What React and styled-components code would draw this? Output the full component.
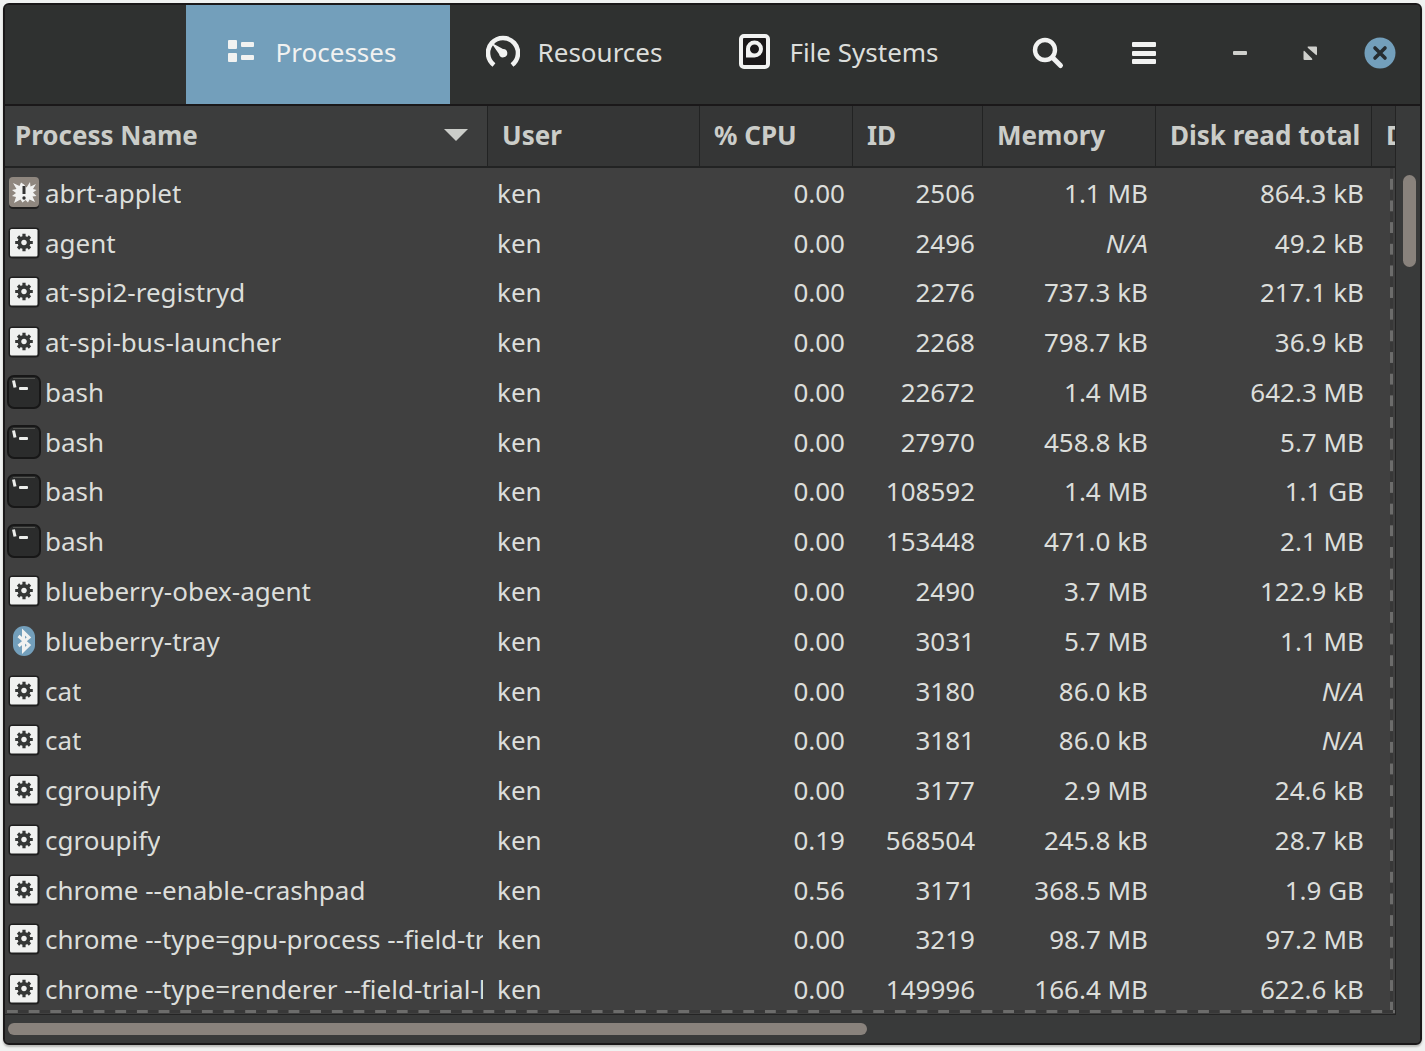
import React, { useState } from "react";
import styled, { createGlobalStyle, css } from "styled-components";

const color = {
  page: "#f0f2f1",
  frame: "#1a1819",
  bar: "#2f3130",
  head: "#353636",
  headSorted: "#3c3d3d",
  body: "#404040",
  trough: "#393a3a",
  thumb: "#89827c",
  accent: "#739fbb",
  text: "#dcdedb",
  headText: "#cbcdc9",
  bright: "#f1f2f1",
};

const GlobalStyle = createGlobalStyle`
  * { box-sizing: border-box; }
  body {
    margin: 0;
    background: ${color.page};
    color: ${color.text};
    font: 26px/36px "Noto Sans", "Open Sans", sans-serif;
  }
  button { font: inherit; color: inherit; background: none; border: 0; padding: 0; margin: 0; }
`;

const Page = styled.div`
  display: flex;
  min-height: 100vh;
  padding: 3px 3px 6px;
`;

const Window = styled.main`
  flex: 1;
  min-width: 0;
  display: flex;
  flex-direction: column;
  border: 2px solid ${color.frame};
  border-radius: 6px;
  background: ${color.body};
  box-shadow: 0 2px 2px #b9bab7;
  overflow: hidden;
`;

const TitleBar = styled.header`
  display: flex;
  align-items: stretch;
  height: 101px;
  padding-right: 5px;
  background: ${color.bar};
  border-bottom: 2px solid ${color.frame};
`;

const TabList = styled.div`
  flex: 1;
  display: flex;
  justify-content: flex-end;
  margin-right: 22px;
`;

const Tab = styled.button`
  display: flex;
  align-items: center;
  justify-content: center;
  gap: 18px;
  width: 264px;
  padding: 0 16px 5px 0;
  white-space: nowrap;
  color: ${(p) => (p.$active ? color.bright : color.text)};
  background: ${(p) => (p.$active ? color.accent : "transparent")};
`;

const BarButton = styled.button`
  display: flex;
  align-items: center;
  justify-content: center;
  width: 96px;
  padding-bottom: 5px;
  color: ${color.bright};
`;

const WindowButtons = styled.div`
  display: flex;
  margin-left: 13px;
`;

const WindowButton = styled(BarButton)`
  width: 70px;
  color: #cfd0cc;
`;

const Icon = styled.svg`
  flex: none;
  display: block;
  width: 34px;
  height: ${(p) => (p.$tall ? 36 : 34)}px;
`;

const Content = styled.div`
  flex: 1;
  display: grid;
  grid-template-columns: minmax(0, 1fr) 24px;
  grid-template-rows: 1fr 28px;
`;

const ListArea = styled.div`
  position: relative;
  display: flex;
  min-width: 0;
  border-right: 1px solid #242424;
  border-bottom: 1px solid #242424;
`;

/* Dashed hint along the edges where the list continues */
const Undershoot = styled.div`
  position: absolute;
  pointer-events: none;
  ${(p) =>
    p.$edge === "bottom"
      ? css`
          left: 2px;
          right: 0;
          bottom: 1px;
          height: 3px;
          background: linear-gradient(90deg, #6c6c6b 50%, #383838 50%) 0 0 / calc(65px / 3) 3px;
        `
      : css`
          top: 62px;
          right: 2px;
          bottom: 2px;
          width: 3px;
          background: linear-gradient(#383838 50%, #6c6c6b 50%) 0 0 / 3px calc(65px / 3);
        `}
`;

const Table = styled.table`
  flex: 1;
  min-width: 0;
  display: flex;
  flex-direction: column;
`;

const rowGrid = css`
  display: grid;
  grid-template-columns: minmax(0, 1fr) 212px 153px 130px 173px 216px 24px;
`;

const Head = styled.thead`
  display: block;
`;

const HeadRow = styled.tr`
  ${rowGrid}
  height: 62px;
  border-bottom: 2px solid #222323;
`;

const HeadCell = styled.th`
  display: flex;
  min-width: 0;
  padding: 0;
  overflow: hidden;
  background: ${(p) => (p.$sorted ? color.headSorted : color.head)};
  & + & { border-left: 1px solid #222323; }
`;

const SortButton = styled.button`
  flex: 1;
  display: flex;
  align-items: center;
  justify-content: space-between;
  padding: 0 0 2px ${(p) => (p.$first ? 10 : 14)}px;
  font-weight: 700;
  color: ${color.headText};
  white-space: nowrap;
`;

const Arrow = styled.svg`
  width: 26px;
  height: 14px;
  margin-right: 18px;
`;

const Body = styled.tbody`
  flex: 1;
  display: flex;
  flex-direction: column;
`;

const Row = styled.tr`
  ${rowGrid}
  flex: 1 0 44px;
  align-items: center;
`;

const Cell = styled.td`
  padding: 0 7px 0 10px;
  white-space: nowrap;
  text-align: ${(p) => (p.$number ? "right" : "left")};
  font-style: ${(p) => (p.$missing ? "italic" : "normal")};
`;

const NameCell = styled.td`
  display: flex;
  align-items: center;
  gap: 4px;
  min-width: 0;
  padding: 0 4px 0 2px;
`;

const Name = styled.span`
  overflow: hidden;
  white-space: nowrap;
`;

const Trough = styled.div`
  display: flex;
  flex-direction: ${(p) => (p.$vertical ? "column" : "row")};
  padding: ${(p) => (p.$vertical ? "69px 4px 6px 7px" : "8px 3px")};
  background: ${color.trough};
`;

const Thumb = styled.div`
  flex: 0 0 ${(p) => p.$size}%;
  border-radius: 7px;
  background: ${color.thumb};
`;

const Corner = styled.div`
  background: ${color.trough};
`;

function ListIcon() {
  return (
    <Icon $tall viewBox="0 0 34 36" fill="currentColor" aria-hidden="true">
      <rect x="4" y="6" width="9" height="9" rx="1" />
      <rect x="4" y="19" width="9" height="9" rx="1" />
      <rect x="17" y="8" width="13" height="5" rx="1" />
      <rect x="17" y="21" width="13" height="5" rx="1" />
    </Icon>
  );
}

function GaugeIcon() {
  return (
    <Icon $tall viewBox="0 0 34 36" fill="none" stroke={color.bright} aria-hidden="true">
      <path d="M8 31A15 15 0 1 1 26 31" strokeWidth="4.6" />
      <path d="M5 8.500L17 15A4.200 4.200 0 1 1 13 20Z" fill={color.bright} stroke="none" />
    </Icon>
  );
}

function DiskIcon() {
  return (
    <Icon $tall viewBox="0 0 34 36" aria-hidden="true">
      <rect x="4" y="2" width="27" height="31" rx="3" fill={color.frame} stroke={color.bright} strokeWidth="4" />
      <path
        fillRule="evenodd"
        fill={color.bright}
        d="M17.5 6.5A8.5 8.5 0 0 1 17.5 23.5H9V15A8.5 8.5 0 0 1 17.5 6.5ZM17.5 10.5A4.5 4.5 0 1 0 17.5 19.5A4.5 4.5 0 1 0 17.5 10.5Z"
      />
    </Icon>
  );
}

function SearchIcon() {
  return (
    <Icon $tall viewBox="0 0 34 36" fill="none" stroke="currentColor" aria-hidden="true">
      <circle cx="14" cy="16" r="10" strokeWidth="4.4" />
      <path d="M21.5 23.5L29.5 31.5" strokeWidth="5" strokeLinecap="round" />
    </Icon>
  );
}

function MenuIcon() {
  return (
    <Icon $tall viewBox="0 0 34 36" fill="currentColor" aria-hidden="true">
      <rect x="5" y="8" width="24" height="5" rx="1" />
      <rect x="5" y="17" width="24" height="5" rx="1" />
      <rect x="5" y="25" width="24" height="5" rx="1" />
    </Icon>
  );
}

function MinimizeIcon() {
  return (
    <Icon $tall viewBox="0 0 34 36" fill="currentColor" aria-hidden="true">
      <rect x="10" y="17" width="14" height="4" rx="1" />
    </Icon>
  );
}

function RestoreIcon() {
  return (
    <Icon $tall viewBox="0 0 34 36" fill="currentColor" aria-hidden="true">
      <path d="M15 12.500H23Q24 12.500 24 13.500V20Q24 22 22.500 20.500L15 14Q14 12.500 15 12.500Z" />
      <path d="M10.500 18Q10.500 16 12 17.500L19 24.500Q20 26 18.500 26H11.500Q10.500 26 10.500 25Z" />
    </Icon>
  );
}

function CloseIcon() {
  return (
    <Icon $tall viewBox="0 0 34 36" aria-hidden="true">
      <circle cx="17" cy="19" r="15.500" fill={color.accent} />
      <path d="M12 14L22 24M22 14L12 24" stroke="#262c30" strokeWidth="3.600" strokeLinecap="round" />
    </Icon>
  );
}

function GearIcon() {
  return (
    <Icon viewBox="0 0 34 34" aria-hidden="true">
      <rect x="1.500" y="1.500" width="31" height="31" rx="4" fill="#1f1f1f" />
      <rect x="3" y="3" width="27.500" height="27.500" rx="1.500" fill="#f0f1f0" />
      <g transform="translate(17 16.500)">
        <path d="M0 -8.800V8.800M-8.800 0H8.800M-6 -6L6 6M6 -6L-6 6" stroke="#353736" strokeWidth="3.200" />
        <circle r="4.600" fill="#f0f1f0" stroke="#353736" strokeWidth="3.600" />
      </g>
    </Icon>
  );
}

function TerminalIcon() {
  return (
    <Icon viewBox="0 0 34 34" aria-hidden="true">
      <rect x="1" y="1" width="32" height="32" rx="6" fill="#2b2c2c" stroke="#171717" strokeWidth="2" />
      <path d="M6 3.500H28" stroke="#555653" strokeWidth="1" />
      <path d="M6.500 5.500L8 12.500" fill="none" stroke="#ecedeb" strokeWidth="3" />
      <rect x="12" y="12" width="9" height="3" rx="1" fill="#ecedeb" />
    </Icon>
  );
}

function BurstIcon() {
  return (
    <Icon viewBox="0 0 34 34" aria-hidden="true">
      <rect x="2" y="3" width="30" height="30" rx="4" fill="#1f1f1f" />
      <rect x="2" y="1" width="30" height="30" rx="4" fill="#8f877f" />
      <path
        fill="#f1f2f1"
        d="M17 8.500L19.500 11.500L23 6L23.500 10.500L29 8L26 13L29.500 14L26 16.500L29.500 20L25.500 20.500L28 26L22.500 23.500L21 26.500L18.500 24L15.500 26.500L13.500 23.500L7 27L9 21L5 20L9 17L5 14L9.500 13L6 7L12.500 10L14 6.500Z"
      />
      <path d="M17 10V18" stroke="#333" strokeWidth="3" />
      <circle cx="17" cy="22" r="1.700" fill="#333" />
    </Icon>
  );
}

function BluetoothIcon() {
  return (
    <Icon viewBox="0 0 34 34" aria-hidden="true">
      <rect x="6" y="2" width="22" height="30" rx="11" fill={color.accent} />
      <path d="M11.500 12L22 21L16.500 26.500V8L22 13.500L11.500 22" fill="none" stroke="#f1f2f1" strokeWidth="3" />
    </Icon>
  );
}

const processIcons = { gear: GearIcon, terminal: TerminalIcon, burst: BurstIcon, bluetooth: BluetoothIcon };

const tabs = [
  { label: "Processes", Glyph: ListIcon },
  { label: "Resources", Glyph: GaugeIcon },
  { label: "File Systems", Glyph: DiskIcon },
];

const columns = ["Process Name", "User", "% CPU", "ID", "Memory", "Disk read total", "D"];

const processes = [
  ["burst", "abrt-applet", "0.00", "2506", "1.1 MB", "864.3 kB"],
  ["gear", "agent", "0.00", "2496", "N/A", "49.2 kB"],
  ["gear", "at-spi2-registryd", "0.00", "2276", "737.3 kB", "217.1 kB"],
  ["gear", "at-spi-bus-launcher", "0.00", "2268", "798.7 kB", "36.9 kB"],
  ["terminal", "bash", "0.00", "22672", "1.4 MB", "642.3 MB"],
  ["terminal", "bash", "0.00", "27970", "458.8 kB", "5.7 MB"],
  ["terminal", "bash", "0.00", "108592", "1.4 MB", "1.1 GB"],
  ["terminal", "bash", "0.00", "153448", "471.0 kB", "2.1 MB"],
  ["gear", "blueberry-obex-agent", "0.00", "2490", "3.7 MB", "122.9 kB"],
  ["bluetooth", "blueberry-tray", "0.00", "3031", "5.7 MB", "1.1 MB"],
  ["gear", "cat", "0.00", "3180", "86.0 kB", "N/A"],
  ["gear", "cat", "0.00", "3181", "86.0 kB", "N/A"],
  ["gear", "cgroupify", "0.00", "3177", "2.9 MB", "24.6 kB"],
  ["gear", "cgroupify", "0.19", "568504", "245.8 kB", "28.7 kB"],
  ["gear", "chrome --enable-crashpad", "0.56", "3171", "368.5 MB", "1.9 GB"],
  ["gear", "chrome --type=gpu-process --field-tr", "0.00", "3219", "98.7 MB", "97.2 MB"],
  ["gear", "chrome --type=renderer --field-trial-h", "0.00", "149996", "166.4 MB", "622.6 kB"],
];

function ProcessRow({ process }) {
  const [icon, name, ...numbers] = process;
  const Glyph = processIcons[icon];
  return (
    <Row>
      <NameCell>
        <Glyph />
        <Name>{name}</Name>
      </NameCell>
      <Cell>ken</Cell>
      {numbers.map((value, i) => (
        <Cell key={i} $number $missing={value === "N/A"}>
          {value}
        </Cell>
      ))}
    </Row>
  );
}

export default function App() {
  const [active, setActive] = useState(0);
  return (
    <Page>
      <GlobalStyle />
      <Window>
        <TitleBar>
          <TabList role="tablist">
            {tabs.map(({ label, Glyph }, i) => (
              <Tab key={label} role="tab" aria-selected={i === active} $active={i === active} onClick={() => setActive(i)}>
                <Glyph />
                {label}
              </Tab>
            ))}
          </TabList>
          <BarButton aria-label="Search"><SearchIcon /></BarButton>
          <BarButton aria-label="Menu"><MenuIcon /></BarButton>
          <WindowButtons>
            <WindowButton aria-label="Minimize"><MinimizeIcon /></WindowButton>
            <WindowButton aria-label="Restore"><RestoreIcon /></WindowButton>
            <WindowButton aria-label="Close"><CloseIcon /></WindowButton>
          </WindowButtons>
        </TitleBar>
        <Content>
          <ListArea>
            <Table>
              <Head>
                <HeadRow>
                  {columns.map((label, i) => (
                    <HeadCell key={label} scope="col" $sorted={i === 0} aria-sort={i === 0 ? "ascending" : undefined}>
                      <SortButton $first={i === 0}>
                        {label}
                        {i === 0 && (
                          <Arrow viewBox="0 0 26 14" aria-hidden="true">
                            <path d="M1 1H25L13 13Z" fill={color.headText} />
                          </Arrow>
                        )}
                      </SortButton>
                    </HeadCell>
                  ))}
                </HeadRow>
              </Head>
              <Body>
                {processes.map((process) => (
                  <ProcessRow key={process[3]} process={process} />
                ))}
              </Body>
            </Table>
            <Undershoot $edge="right" />
            <Undershoot $edge="bottom" />
          </ListArea>
          <Trough $vertical>
            <Thumb $size={11} />
          </Trough>
          <Trough>
            <Thumb $size={62} />
          </Trough>
          <Corner />
        </Content>
      </Window>
    </Page>
  );
}
